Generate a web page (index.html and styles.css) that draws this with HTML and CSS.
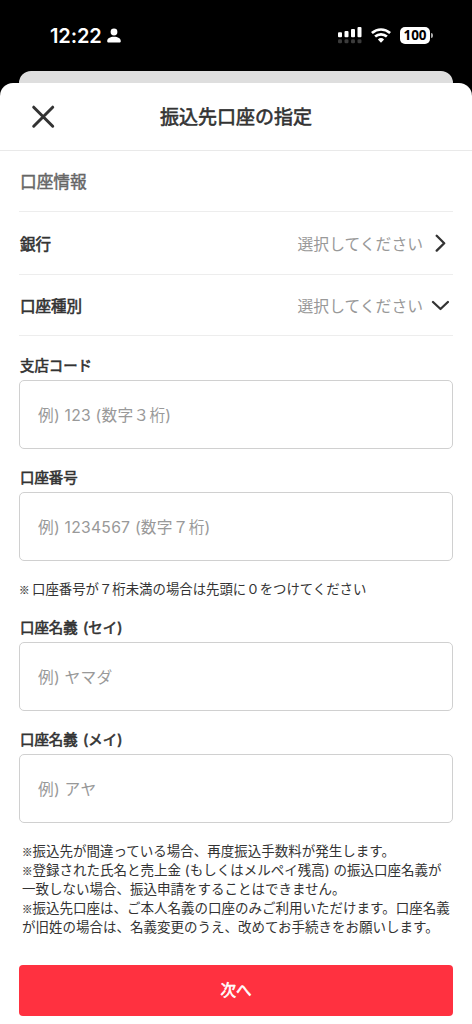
FILE: index.html
```html
<!DOCTYPE html>
<html lang="ja">
<head>
<meta charset="utf-8">
<title>振込先口座の指定</title>
<link rel="stylesheet" href="styles.css">
</head>
<body>
<div class="screen">
  <header class="status">
    <div class="status-left">
      <span class="time">12:22</span>
      <svg class="person" width="14" height="16" viewBox="0 0 14 16" fill="#fff"><circle cx="7" cy="4" r="3.4"/><path d="M.2 13.2C.2 10.300 3 8.700 7 8.700s6.800 1.600 6.800 4.500c0 .9-.6 1.400-1.500 1.400H1.700c-.9 0-1.500-.5-1.500-1.400Z"/></svg>
    </div>
    <div class="status-right">
      <svg width="24" height="17" viewBox="0 0 24 17"><g fill="#fff"><rect x="0" y="5.300" width="4" height="5" rx="1"/><rect x="6.500" y="4" width="4" height="6.300" rx="1"/><rect x="13" y="2" width="4" height="8.300" rx="1"/><rect x="19.500" y="0" width="4" height="10.300" rx="1"/></g><g fill="#3b3b3b"><rect x="0" y="12.300" width="4" height="4" rx="1.300"/><rect x="6.500" y="12.300" width="4" height="4" rx="1.300"/><rect x="13" y="12.300" width="4" height="4" rx="1.300"/><rect x="19.500" y="12.300" width="4" height="4" rx="1.300"/></g></svg>
      <svg class="wifi" width="20" height="15" viewBox="0 0 20 15"><g fill="none" stroke="#fff" stroke-width="2.700"><path d="M.9 5.100Q5 1.500 10 1.500T19.100 5.100"/><path d="M4.100 8.600Q6.700 6.300 10 6.300T15.900 8.600"/></g><path d="M6.900 11.400Q8.300 10.100 10 10.100t3.100 1.300L10 14.700Z" fill="#fff"/></svg>
      <div class="battery"><span class="level">100</span><i class="cap"></i></div>
    </div>
  </header>
  <div class="back-sheet"></div>
  <main class="sheet">
    <div class="titlebar">
      <svg class="close" width="24" height="24" viewBox="0 0 24 24"><path d="M2.700 2.200 21.700 21.200M21.700 2.200 2.700 21.200" fill="none" stroke="#333" stroke-width="3" stroke-linecap="round"/></svg>
      <h1 class="title">振込先口座の指定</h1>
    </div>
    <div class="content">
      <h2 class="section">口座情報</h2>
      <div class="row row-bank">
        <span class="row-name">銀行</span>
        <span class="row-value">選択してください</span>
        <svg class="chevron" width="18" height="18" viewBox="0 0 18 18"><path d="M5.700 1.800 13.200 9.200l-7.500 7.400" fill="none" stroke="#333" stroke-width="2.300" stroke-linecap="round" stroke-linejoin="round"/></svg>
      </div>
      <div class="row row-type">
        <span class="row-name">口座種別</span>
        <span class="row-value">選択してください</span>
        <svg class="chevron" width="18" height="18" viewBox="0 0 18 18"><path d="M2 6 9.500 13l7.400-7" fill="none" stroke="#333" stroke-width="2.300" stroke-linecap="round" stroke-linejoin="round"/></svg>
      </div>
      <div class="field">
        <span class="label">支店コード</span>
        <div class="input">例) 123 (数字３桁)</div>
      </div>
      <div class="field">
        <span class="label">口座番号</span>
        <div class="input">例) 1234567 (数字７桁)</div>
      </div>
      <p class="hint"><span class="mark">※</span>口座番号が７桁未満の場合は先頭に０をつけてください</p>
      <div class="field">
        <span class="label">口座名義 (セイ)</span>
        <div class="input">例) ヤマダ</div>
      </div>
      <div class="field">
        <span class="label">口座名義 (メイ)</span>
        <div class="input">例) アヤ</div>
      </div>
      <div class="notes">
        <p><span class="mark">※</span>振込先が間違っている場合、再度振込手数料が発生します。</p>
        <p><span class="mark">※</span>登録された氏名と売上金 (もしくはメルペイ残高) の振込口座名義が<br>一致しない場合、振込申請をすることはできません。</p>
        <p><span class="mark">※</span>振込先口座は、ご本人名義の口座のみご利用いただけます。口座名義<br>が旧姓の場合は、名義変更のうえ、改めてお手続きをお願いします。</p>
      </div>
      <button class="next">次へ</button>
    </div>
  </main>
</div>
</body>
</html>
```
FILE: styles.css
```css
* { box-sizing: border-box; margin: 0; padding: 0; }
body { background: #000; font-family: Inter, "Noto Sans CJK JP", sans-serif; color: #333; }
svg { display: block; flex: none; }
.screen { width: 472px; height: 1024px; overflow: hidden; display: flex; flex-direction: column; background: #000; }
.status { height: 71px; flex: none; padding: 0 39px 0 50px; display: flex; justify-content: space-between; align-items: center; color: #fff; }
.status-left, .status-right { display: flex; align-items: center; }
.time { font-size: 20px; line-height: 24px; font-weight: 600; letter-spacing: -0.1px; }
.person { margin-left: 5px; }
.wifi { margin-left: 9px; }
.battery { margin-left: 9px; display: flex; align-items: center; gap: 1px; }
.level { width: 30px; height: 17px; border-radius: 5px; background: #fff; color: #000; font-family: "Noto Sans", sans-serif; font-size: 13.500px; line-height: 17px; font-weight: 700; text-align: center; letter-spacing: -0.1px; }
.cap { width: 2px; height: 5px; border-radius: 0 2px 2px 0; background: #aaa; }
.back-sheet { flex: none; height: 12px; margin: 0 19px; border-radius: 12px 12px 0 0; background: #dedede; }
.sheet { flex: 1; background: #fff; border-radius: 13px 13px 0 0; }
.titlebar { height: 68px; border-bottom: 1px solid #e9e9e9; display: grid; grid-template-columns: 48px 1fr 48px; align-items: center; }
.close { margin-left: 31px; }
.title { padding-top: 2px; font-size: 19px; line-height: 28px; font-weight: 400; text-align: center; -webkit-text-stroke: 0.6px #333; }
.content { padding: 0 19px; display: flex; flex-direction: column; }
.section { height: 61px; border-bottom: 1px solid #ededed; padding-left: 1px; font-size: 16.700px; line-height: 63px; font-weight: 400; color: #666; -webkit-text-stroke: 0.45px #666; }
.row { display: flex; align-items: center; border-bottom: 1px solid #ededed; padding-right: 4px; }
.row-bank { height: 63px; }
.row-type { height: 61px; }
.row-name { padding-left: 1px; font-size: 15.500px; font-weight: 400; flex: 1; -webkit-text-stroke: 0.6px #333; }
.row-value { font-size: 15.800px; color: #999; }
.chevron { margin-left: 8px; }
.field { height: 112px; padding-top: 18px; }
.label { display: block; height: 26px; padding-left: 1px; font-size: 14.400px; line-height: 24px; font-weight: 400; word-spacing: 1.500px; white-space: nowrap; -webkit-text-stroke: 0.6px #333; }
.input { height: 69px; border: 1.500px solid #d0d0d0; border-radius: 5px; padding: 0 18px; display: flex; align-items: center; font-size: 15.700px; letter-spacing: 0.25px; color: #999; white-space: pre; }
.hint { height: 38px; padding-top: 19px; font-size: 13.400px; line-height: 20px; white-space: nowrap; }
.mark { display: inline-block; width: 10.500px; font-family: "Noto Sans CJK JP", sans-serif; font-size: 10.500px; line-height: 1; -webkit-text-stroke: 0.2px #333; }
.hint .mark { width: 13px; }
.notes { padding: 20px 0 0 3px; height: 117px; font-size: 13.500px; line-height: 18.900px; white-space: nowrap; }
.next { margin-top: 26px; height: 51px; border: 0; border-radius: 4px; background: #ff3140; color: #fff; font: 400 15.500px/51px Inter, "Noto Sans CJK JP", sans-serif; -webkit-text-stroke: 0.6px #fff; }
```
